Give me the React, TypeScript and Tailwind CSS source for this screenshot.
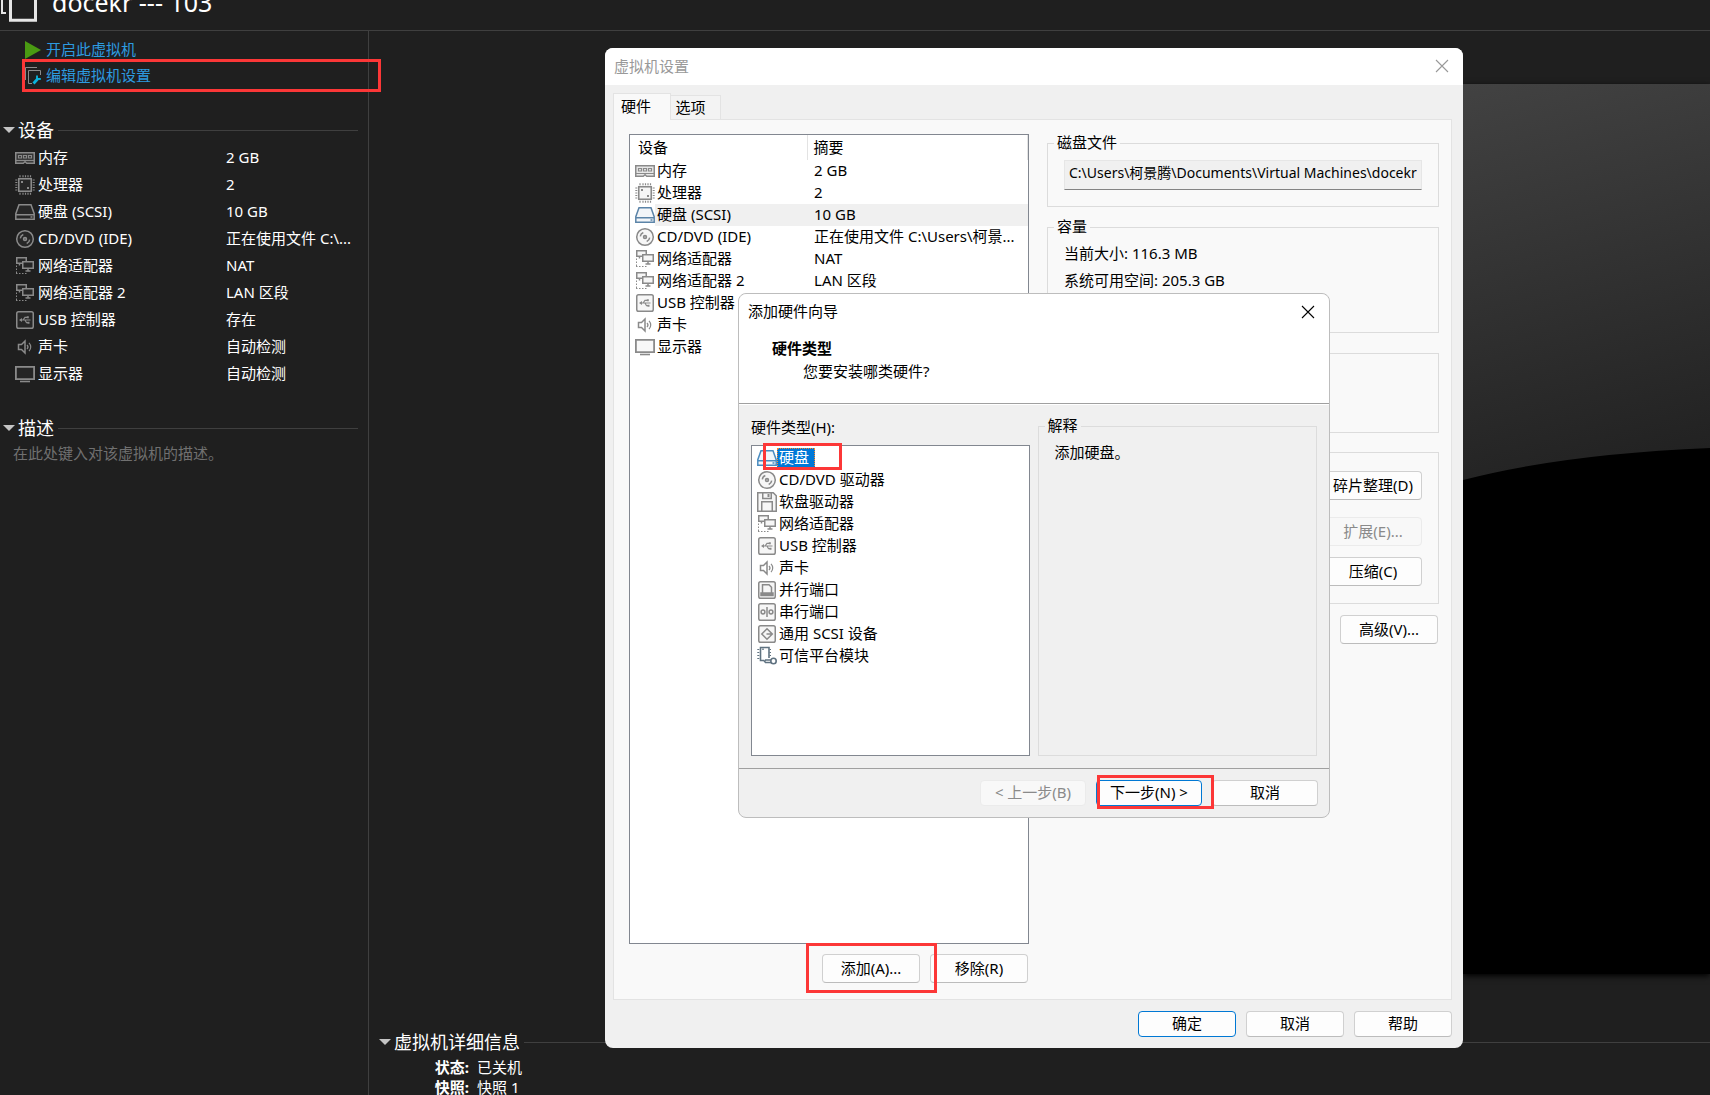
import React, { useState } from 'react';

type IconName =
    | 'memory' | 'cpu' | 'disk' | 'cd' | 'floppy' | 'network' | 'usb' | 'sound'
    | 'display' | 'parallel' | 'serial' | 'scsi' | 'tpm';

const port = <rect x="1.75" y="1.75" width="16.5" height="16.5" rx="1.8" fill="currentColor" fillOpacity=".08" />;

const shapes: Record<IconName, React.ReactNode> = {
    memory: (
        <>
            <path d="M.75 4.75h18.5v10.5h-7.5l-1.7-1.5-1.8 1.5H.75z" fill="currentColor" fillOpacity=".2" />
            <path d="M1 12.5h18" strokeWidth="1.2" />
            <path d="M3.5 7.5h3v2.5h-3zM8.5 7.5h3v2.5h-3zM13.5 7.5h3v2.5h-3z" strokeWidth="1.2" />
        </>
    ),
    cpu: (
        <>
            <rect x="3.75" y="3.75" width="12.5" height="12.5" strokeWidth="1.6" fill="currentColor" fillOpacity=".08" />
            <path d="M5 .3v2M8 .3v2M10.5 .3v2M13 .3v2M15.500 .3v2M5 17.700v2M8 17.700v2M10.500 17.700v2M13 17.700v2M15.500 17.700v2" strokeWidth="1.200" />
            <path d="M.3 5h2M.3 7.500h2M.3 10h2M.3 12.500h2M.3 15h2M17.700 5h2M17.700 7.500h2M17.700 10h2M17.700 12.500h2M17.700 15h2" strokeWidth="1.200" />
            <path d="M6 6h2v2H6zM12 12h2v2h-2z" fill="currentColor" stroke="none" />
        </>
    ),
    disk: (
        <>
            <path d="M4 2.750h12l3.200 9v5.500H.8v-5.500z" fill="currentColor" fillOpacity=".08" />
            <path d="M1 12.750h18" />
            <path d="M15.500 15h2" />
        </>
    ),
    cd: (
        <>
            <circle cx="10" cy="10" r="8.3" fill="currentColor" fillOpacity=".08" />
            <circle cx="10" cy="10" r="1.4" strokeWidth="1.7" />
            <path d="M5.300 9.300A4.800 4.800 0 0 1 8.300 5.500M14.700 10.700A4.800 4.800 0 0 1 11.700 14.500" />
        </>
    ),
    floppy: (
        <>
            <path d="M.75 .75h15.500l3 3v15.500H.75z" fill="currentColor" fillOpacity=".08" />
            <path d="M4.750 19V9.750h10.500V19M5.750 1v5.500h8.500V1" />
            <path d="M11.500 2v3" strokeWidth="2" />
        </>
    ),
    network: (
        <>
            <path d="M7 7.250H1.750V1.750h9.500V5" fill="currentColor" fillOpacity=".08" />
            <path d="M7.750 5.750h10.500v6.500H7.750z" fill="currentColor" fillOpacity=".08" />
            <path d="M4.500 7.500v2M13 12.500v2.500M10.500 15h5" />
            <path d="M1.500 9.500v9M1 17.500h12" strokeDasharray="1.500 1.500" strokeWidth="1" />
        </>
    ),
    usb: (
        <>
            {port}
            <path d="M5.500 10h10M8 10l2-2.700h2M10 10l1.500 2.700H13" strokeWidth="1.200" />
            <path d="M7 8L4 10l3 2zM11.800 6.300h2v2h-2zM12.500 11.700h2v2h-2z" fill="currentColor" stroke="none" />
        </>
    ),
    sound: (
        <>
            <path d="M3.500 7.500h3l3.500-3.500v12l-3.500-3.500h-3z" />
            <path d="M12 8c1.200 1.200 1.200 2.800 0 4M14 5.800c2.300 2.400 2.300 6 0 8.400" strokeWidth="1.200" />
        </>
    ),
    display: (
        <>
            <path d="M.9 2.900h18.200v12.200H.9z" strokeWidth="1.800" fill="currentColor" fillOpacity=".06" />
            <path d="M5 17.500h10" strokeWidth="1.600" />
        </>
    ),
    parallel: (
        <>
            {port}
            <path d="M5.500 13V4.750h6.500l2.500 2.500V13" />
            <path d="M4 13h12v2.500H4z" fill="currentColor" />
        </>
    ),
    serial: (
        <>
            {port}
            <circle cx="6" cy="10" r="1.900" />
            <circle cx="14" cy="10" r="1.900" />
            <path d="M10 5v10" />
        </>
    ),
    scsi: (
        <>
            {port}
            <path d="M12.800 7.500L10 4.800 4.800 10l5.200 5.200 2.800-2.700M9.500 10h5.500M12.800 7.500L15.300 10l-2.500 2.500" />
        </>
    ),
    tpm: (
        <>
            <path d="M12 12V1.500H3.500v13H7" strokeWidth="1.600" />
            <path d="M.3 3.500h2M.3 6.500h2M.3 9.500h2M.3 12.500h2M12.500 3.500h1.500M12.500 6.500h1.500M12.500 9.500h1.500" strokeWidth="1.200" />
            <path d="M6 2.500v1.500" />
            <circle cx="16.500" cy="15" r="2.700" strokeWidth="1.600" />
            <path d="M14 14H8.500l-1 1.200 1 1.300H14" />
        </>
    ),
};

function Icon({ name, className = '' }: { name: IconName; className?: string }) {
    return (
        <svg viewBox="0 0 20 20" className={`w-5 h-5 shrink-0 ${className}`} fill="none" stroke="currentColor" strokeWidth="1.5" aria-hidden="true">
            {shapes[name]}
        </svg>
    );
}

const devices: { icon: IconName; name: string; summary: string; full?: string }[] = [
    { icon: 'memory', name: '内存', summary: '2 GB' },
    { icon: 'cpu', name: '处理器', summary: '2' },
    { icon: 'disk', name: '硬盘 (SCSI)', summary: '10 GB' },
    { icon: 'cd', name: 'CD/DVD (IDE)', summary: '正在使用文件 C:\\...', full: '正在使用文件 C:\\Users\\柯景...' },
    { icon: 'network', name: '网络适配器', summary: 'NAT' },
    { icon: 'network', name: '网络适配器 2', summary: 'LAN 区段' },
    { icon: 'usb', name: 'USB 控制器', summary: '存在' },
    { icon: 'sound', name: '声卡', summary: '自动检测' },
    { icon: 'display', name: '显示器', summary: '自动检测' },
];

const hardwareTypes: { icon: IconName; name: string; tint?: string }[] = [
    { icon: 'disk', name: '硬盘', tint: 'text-[#4a8cc0]' },
    { icon: 'cd', name: 'CD/DVD 驱动器' },
    { icon: 'floppy', name: '软盘驱动器' },
    { icon: 'network', name: '网络适配器' },
    { icon: 'usb', name: 'USB 控制器' },
    { icon: 'sound', name: '声卡' },
    { icon: 'parallel', name: '并行端口' },
    { icon: 'serial', name: '串行端口' },
    { icon: 'scsi', name: '通用 SCSI 设备' },
    { icon: 'tpm', name: '可信平台模块', tint: 'text-[#5f7280]' },
];

function Mark({ className }: { className: string }) {
    return <span className={`absolute z-10 border-3 border-[#fc3737] pointer-events-none ${className}`} />;
}

function CloseIcon() {
    return (
        <svg viewBox="0 0 14 14" className="w-3.5 h-3.5" fill="none" stroke="currentColor" strokeWidth="1.1" aria-hidden="true">
            <path d="M1 1l12 12M13 1L1 13" />
        </svg>
    );
}

function SectionTitle({ title }: { title: string }) {
    return (
        <h2 className="flex items-center h-6">
            <button className="flex items-center gap-[3px] text-lg leading-6 text-white">
                <svg viewBox="0 0 12 6" className="w-3 h-1.5" fill="#c4c4c4" aria-hidden="true">
                    <path d="M0 0h12L6 6z" />
                </svg>
                {title}
            </button>
            <span className="flex-1 ml-1 h-px bg-[#3f3f3f]" />
        </h2>
    );
}

function DialogButton({ children, className = '', primary, disabled }: { children: React.ReactNode; className?: string; primary?: boolean; disabled?: boolean }) {
    const tone = disabled
        ? 'border-[#ebebeb] bg-[#f8f8f8] text-[#8a8a8a]'
        : primary
            ? 'border-[#0078d4] bg-[#fdfdfd]'
            : 'border-[#d0d0d0] border-b-[#bcbcbc] bg-[#fdfdfd]';
    return (
        <button disabled={disabled} className={`flex items-center justify-center pb-0.5 rounded-sm border whitespace-nowrap ${tone} ${className}`}>
            {children}
        </button>
    );
}

function Sidebar() {
    return (
        <aside className="w-[369px] shrink-0 border-r border-[#3f3f3f] pl-[3px] pr-2.5 pt-1.5 text-white">
            <nav className="relative pl-[22px] text-[#2d9be0]">
                <a href="#start" className="flex items-center gap-[5px] h-[26px]">
                    <svg viewBox="0 0 16 18" className="w-4 h-[18px]" fill="#4a9a12" aria-hidden="true">
                        <path d="M0 0l16 9-16 9z" />
                    </svg>
                    <span className="pb-0.5">开启此虚拟机</span>
                </a>
                <a href="#settings" className="flex items-center gap-[5px] h-[26px]">
                    <svg viewBox="0 0 16 18" className="w-4 h-[18px]" fill="none" stroke="#8c8c8c" aria-hidden="true">
                        <path d="M.5 13V.5H12" />
                        <path d="M15.500 8V3.500h-12v13H7" />
                        <path d="M8.500 16.500l4.500-5" stroke="#0bb4dc" strokeWidth="2.800" />
                        <path d="M12 8.500v3.300l3.800.2" stroke="#0bb4dc" strokeWidth="1.800" />
                    </svg>
                    <span className="pb-0.5">编辑虚拟机设置</span>
                </a>
                <Mark className="top-[22px] left-[19px] -right-[23px] h-[33px]" />
            </nav>

            <section className="mt-[29px]">
                <SectionTitle title="设备" />
                <dl className="mt-0.5 pl-3">
                    {devices.map((d) => (
                        <div key={d.name} className="flex items-center h-[27px]">
                            <dt className="flex items-center gap-[3px] w-[211px]">
                                <Icon name={d.icon} className="text-[#8a8a8a]" />
                                <span className="pb-0.5">{d.name}</span>
                            </dt>
                            <dd className="pb-0.5 whitespace-nowrap">{d.summary}</dd>
                        </div>
                    ))}
                </dl>
            </section>

            <section className="mt-[29px]">
                <SectionTitle title="描述" />
                <p className="mt-[3px] pl-2.5 text-[#707070]">在此处键入对该虚拟机的描述。</p>
            </section>
        </aside>
    );
}

function Preview() {
    return (
        <div className="flex-1 min-h-0 self-end w-[247px] shadow-[0_2px_6px_#000000]">
            <svg viewBox="0 0 247 890" preserveAspectRatio="none" className="block w-full h-full" aria-hidden="true">
                <defs>
                    <linearGradient id="sheen" gradientUnits="userSpaceOnUse" x1="0" y1="0" x2="110" y2="400">
                        <stop offset="0" stopColor="#424242" />
                        <stop offset="1" stopColor="#222222" />
                    </linearGradient>
                </defs>
                <rect width="247" height="890" fill="#000000" />
                <path d="M0 0h247v364Q100 370 0 396z" fill="url(#sheen)" />
            </svg>
        </div>
    );
}

function Group({ title, className = '', children }: { title?: string; className?: string; children?: React.ReactNode }) {
    return (
        <fieldset className={`border border-[#dcdcdc] min-w-0 ${className}`}>
            {title && <legend className="ml-1.5 px-[3px] leading-[18px] pb-0.5">{title}</legend>}
            {children}
        </fieldset>
    );
}

function SettingsDialog() {
    const [tab, setTab] = useState('hardware');

    return (
        <div role="dialog" aria-label="虚拟机设置" className="absolute top-12 bottom-[47px] left-[605px] right-[247px] flex flex-col rounded-lg overflow-hidden bg-[#f0f0f0] text-black">
            <div className="flex items-center justify-between h-[37px] pl-[9px] pr-3.5 pb-0.5 bg-white text-[#999999]">
                <h1>虚拟机设置</h1>
                <button aria-label="关闭"><CloseIcon /></button>
            </div>

            <div role="tablist" className="flex items-end px-2 pt-2">
                <button role="tab" aria-selected={tab === 'hardware'} onClick={() => setTab('hardware')} className="relative z-10 -mb-px w-[58px] h-[27px] pr-3 pb-0.5 bg-[#f9f9f9] border border-b-0 border-[#e3e3e3]">
                    硬件
                </button>
                <button role="tab" aria-selected={tab === 'options'} onClick={() => setTab('options')} className="w-[50px] h-6 pr-2.5 pb-0.5 bg-[#f3f3f3] border border-b-0 border-l-0 border-[#e3e3e3]">
                    选项
                </button>
            </div>

            <div className="flex flex-1 min-h-0 mx-2 mr-[11px] pt-3.5 pl-[15px] pr-3 bg-[#f9f9f9] border border-[#e3e3e3]">
                <div className="flex flex-col w-[400px] mb-4">
                    <div className="flex-1 bg-white border border-[#828790]">
                        <table className="w-full table-fixed border-collapse">
                            <colgroup>
                                <col className="w-[25px]" />
                                <col className="w-[152px]" />
                                <col />
                            </colgroup>
                            <thead>
                                <tr className="h-[25px] text-left">
                                    <th colSpan={2} className="p-0 pb-0.5 pl-2 font-normal">设备</th>
                                    <th className="p-0 pb-0.5 pl-[6px] font-normal border-x border-[#e3e3e3]">摘要</th>
                                </tr>
                            </thead>
                            <tbody>
                                {devices.map((d) => {
                                    const selected = d.icon === 'disk';
                                    const bg = selected ? 'bg-[#f0f0f0]' : '';
                                    return (
                                        <tr key={d.name} className="h-[22px] leading-5">
                                            <td className="p-0 pl-[5px]">
                                                <Icon name={d.icon} className={selected ? 'text-[#5b84a8]' : 'text-[#8a8a8a]'} />
                                            </td>
                                            <td className={`p-0 pb-0.5 pl-0.5 whitespace-nowrap ${bg}`}>{d.name}</td>
                                            <td className={`p-0 pb-0.5 pl-[7px] whitespace-nowrap overflow-hidden ${bg}`}>{d.full ?? d.summary}</td>
                                        </tr>
                                    );
                                })}
                            </tbody>
                        </table>
                    </div>
                    <div className="flex justify-end gap-2.5 mt-2.5 pr-px">
                        <div className="relative">
                            <DialogButton className="w-[98px] h-[29px]">添加(A)...</DialogButton>
                            <Mark className="-left-4 -right-[17px] -top-[11px] -bottom-2.5" />
                        </div>
                        <DialogButton className="w-[98px] h-[29px]">移除(R)</DialogButton>
                    </div>
                </div>

                <div className="flex flex-col flex-1 min-w-0 ml-[18px] -mt-px">
                    <Group title="磁盘文件" className="h-[74px]">
                        <div className="px-4 pt-[7px]">
                            <input
                                aria-label="磁盘文件"
                                readOnly
                                value="C:\Users\柯景腾\Documents\Virtual Machines\docekr"
                                className="block w-full h-[30px] px-1 pb-1.5 text-sm bg-[#f0f0f0] border border-[#e6e6e6] border-b-[#828282] outline-none"
                            />
                        </div>
                    </Group>
                    <Group title="容量" className="mt-2.5 h-[116px]">
                        <div className="px-4 pt-[3px] leading-[27px]">
                            <p>当前大小: 116.3 MB</p>
                            <p>系统可用空间: 205.3 GB</p>
                        </div>
                    </Group>
                    <Group className="mt-5 h-20" />
                    <Group className="mt-[19px] h-[152px] pt-[18px] pr-4 flex flex-col items-end">
                        <DialogButton className="w-[98px] h-[29px]">碎片整理(D)</DialogButton>
                        <DialogButton disabled className="mt-[17px] w-[98px] h-[29px]">扩展(E)...</DialogButton>
                        <DialogButton className="mt-[11px] w-[98px] h-[29px]">压缩(C)</DialogButton>
                    </Group>
                    <DialogButton className="mt-[11px] mr-px self-end w-[98px] h-[29px]">高级(V)...</DialogButton>
                </div>
            </div>

            <div className="flex justify-end gap-2.5 pt-[11px] pb-[11px] pr-[11px]">
                <DialogButton primary className="w-[98px] h-[26px]">确定</DialogButton>
                <DialogButton className="w-[98px] h-[26px]">取消</DialogButton>
                <DialogButton className="w-[98px] h-[26px]">帮助</DialogButton>
            </div>
        </div>
    );
}

function HardwareWizard() {
    const [selected, setSelected] = useState('硬盘');

    return (
        <div role="dialog" aria-label="添加硬件向导" className="absolute top-[293px] left-[738px] right-[380px] flex flex-col rounded-lg border border-[#bdbdbd] bg-[#f0f0f0] text-black">
            <header className="h-[110px] rounded-t-lg bg-white border-b border-[#a0a0a0]">
                <div className="flex items-center justify-between h-9 pl-[9px] pr-3.5">
                    <h1 className="pb-0.5">添加硬件向导</h1>
                    <button aria-label="关闭"><CloseIcon /></button>
                </div>
                <h2 className="mt-1.5 pl-[33px] font-bold leading-6">硬件类型</h2>
                <p className="pl-16 leading-[22px]">您要安装哪类硬件?</p>
            </header>

            <div className="grid grid-cols-[279fr_280fr] gap-2 px-3 pt-[11px] pb-3 border-t border-white">
                <div className="min-w-0">
                    <div id="types-label" className="h-[29px] leading-[22px]">硬件类型(H):</div>
                    <ul role="listbox" aria-labelledby="types-label" className="relative h-[311px] pt-0.5 pl-[5px] bg-white border border-[#828790]">
                        {hardwareTypes.map((t) => (
                            <li key={t.name} role="option" aria-selected={selected === t.name} className="h-[22px]">
                                <button onClick={() => setSelected(t.name)} className="flex items-center">
                                    <Icon name={t.icon} className={t.tint ?? 'text-[#8a8a8a]'} />
                                    <span className={`h-5 leading-[18px] pl-0.5 pr-1.5 ${selected === t.name ? 'bg-[#0078d7] text-white outline-1 -outline-offset-1 outline-dotted outline-[#ff8728]' : ''}`}>
                                        {t.name}
                                    </span>
                                </button>
                            </li>
                        ))}
                        <Mark className="-top-[3px] left-[11px] w-[79px] h-[27px]" />
                    </ul>
                </div>
                <Group title="解释">
                    <p className="px-4 pt-[5px] leading-[22px]">添加硬盘。</p>
                </Group>
            </div>

            <footer className="flex justify-end gap-2.5 pt-[11px] pb-[11px] pr-[11px] border-t border-[#a0a0a0]">
                <DialogButton disabled className="w-[106px] h-[26px]">&lt; 上一步(B)</DialogButton>
                <div className="relative">
                    <DialogButton primary className="w-[106px] h-[26px]">下一步(N) &gt;</DialogButton>
                    <Mark className="left-px -right-3 -top-[5px] -bottom-[3px]" />
                </div>
                <DialogButton className="w-[106px] h-[26px]">取消</DialogButton>
            </footer>
        </div>
    );
}

export default function App() {
    return (
        <div className="relative flex flex-col h-screen overflow-hidden bg-[#1f1f1f] text-[15px] leading-5 font-['Noto_Sans','Noto_Sans_CJK_SC',sans-serif]">
            <header className="flex items-start gap-3.5 h-[31px] shrink-0 border-b border-[#3f3f3f] text-white">
                <svg viewBox="0 0 38 22" className="w-[38px] h-[22px] shrink-0" fill="none" stroke="#e6e6e6" strokeWidth="3" aria-hidden="true">
                    <path d="M2 0v13H6" strokeWidth="2" />
                    <path d="M10.500 0v20.200h25V0" />
                </svg>
                <div className="-mt-4 text-[25px] leading-9">docekr --- 103</div>
            </header>

            <div className="flex flex-1 min-h-0">
                <Sidebar />
                <main className="flex flex-col flex-1 min-w-0 pt-[53px]">
                    <Preview />
                    <section className="mt-14 -mb-0.5 pl-2.5 text-white">
                        <SectionTitle title="虚拟机详细信息" />
                        <dl className="mt-[3px] grid grid-cols-[90px_1fr] gap-x-2 leading-5">
                            <dt className="text-right font-bold">状态:</dt>
                            <dd>已关机</dd>
                            <dt className="text-right font-bold">快照:</dt>
                            <dd>快照 1</dd>
                        </dl>
                    </section>
                </main>
            </div>

            <SettingsDialog />
            <HardwareWizard />
        </div>
    );
}
